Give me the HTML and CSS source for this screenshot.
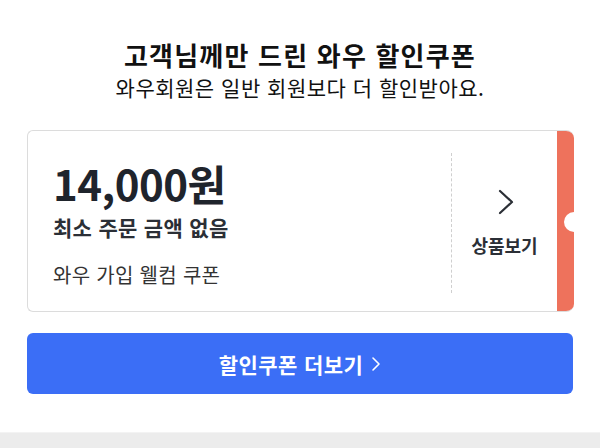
FILE: index.html
```html
<!DOCTYPE html>
<html lang="ko">
    <head>
        <meta charset="utf-8">
        <title>와우 할인쿠폰</title>
        <link rel="stylesheet" href="styles.css">
    </head>
    <body>
        <div class="header">
            <p class="title">고객님께만 드린 와우 할인쿠폰</p>
            <p class="sub">와우회원은 일반 회원보다 더 할인받아요.</p>
        </div>
        <div class="coupon">
            <div class="info">
                <p class="price">14,000원</p>
                <p class="cond">최소 주문 금액 없음</p>
                <p class="name">와우 가입 웰컴 쿠폰</p>
            </div>
            <div class="divider"></div>
            <div class="action">
                <svg class="chev" width="16" height="26" viewBox="0 0 16 26">
                    <path d="M2 2 L14 13 L2 24" fill="none" stroke="#2b2f36" stroke-width="2.2" stroke-linecap="round" stroke-linejoin="round"/>
                </svg>
                <span class="more">상품보기</span>
            </div>
            <div class="strip"></div>
        </div>
        <div class="btnwrap">
            <div class="btn">할인쿠폰 더보기
                <svg width="10" height="16" viewBox="0 0 10 16">
                    <path d="M2 2 L8 8 L2 14" fill="none" stroke="#fff" stroke-width="1.6" stroke-linecap="round" stroke-linejoin="round"/>
                </svg>
            </div>
        </div>
        <div class="band"></div>
    </body>
</html>
```

FILE: styles.css
```css
body {
    margin: 0;
    width: 600px;
    height: 448px;
    overflow: hidden;
    background: #fff;
    font-family: "Noto Sans CJK KR", "Noto Sans", sans-serif;
    color: #111;
}
p {
    margin: 0;
}
.header {
    padding-top: 38px;
    text-align: center;
}
.title {
    font-size: 26px;
    font-weight: bold;
    line-height: 34px;
    letter-spacing: 1.2px;
}
.sub {
    font-size: 21px;
    line-height: 30px;
    letter-spacing: 0.5px;
}
.coupon {
    position: relative;
    display: flex;
    margin: 28px 26px 0 27px;
    height: 180px;
    border: 1px solid #dcdcdc;
    border-right: none;
    border-radius: 6px 8px 8px 6px;
    overflow: hidden;
}
.info {
    flex: 1;
    padding: 27px 0 0 25px;
    color: #1f242c;
}
.price {
    font-size: 42px;
    font-weight: bold;
    line-height: 50px;
    letter-spacing: -0.5px;
}
.cond {
    margin-top: 5px;
    font-size: 21px;
    font-weight: bold;
    line-height: 28px;
    letter-spacing: 0.3px;
    color: #2b2f36;
}
.name {
    margin-top: 20px;
    font-size: 20px;
    line-height: 28px;
    letter-spacing: 0.3px;
    color: #333;
}
.divider {
    margin: 22px 0 18px;
    border-left: 1px dashed #cfcfcf;
}
.action {
    width: 105px;
    display: flex;
    flex-direction: column;
    align-items: center;
    padding-top: 58px;
}
.chev {
    margin-left: 2px;
}
.more {
    margin-top: 17px;
    font-size: 18px;
    font-weight: bold;
    color: #2b2f36;
}
.strip {
    position: relative;
    width: 17px;
    background: #ee725c;
}
.strip::after {
    content: "";
    position: absolute;
    right: -10px;
    top: 81px;
    width: 20px;
    height: 20px;
    border-radius: 50%;
    background: #fff;
}
.btnwrap {
    padding: 21px 27px 0;
}
.btn {
    height: 61px;
    border-radius: 6px;
    background: #3b6ef6;
    color: #fff;
    font-size: 21px;
    font-weight: bold;
    letter-spacing: 0.4px;
    display: flex;
    align-items: center;
    justify-content: center;
    gap: 8px;
}
.band {
    margin-top: 38px;
    height: 16px;
    border-top: 1px solid #f3f3f3;
    background: #ececec;
}
```
